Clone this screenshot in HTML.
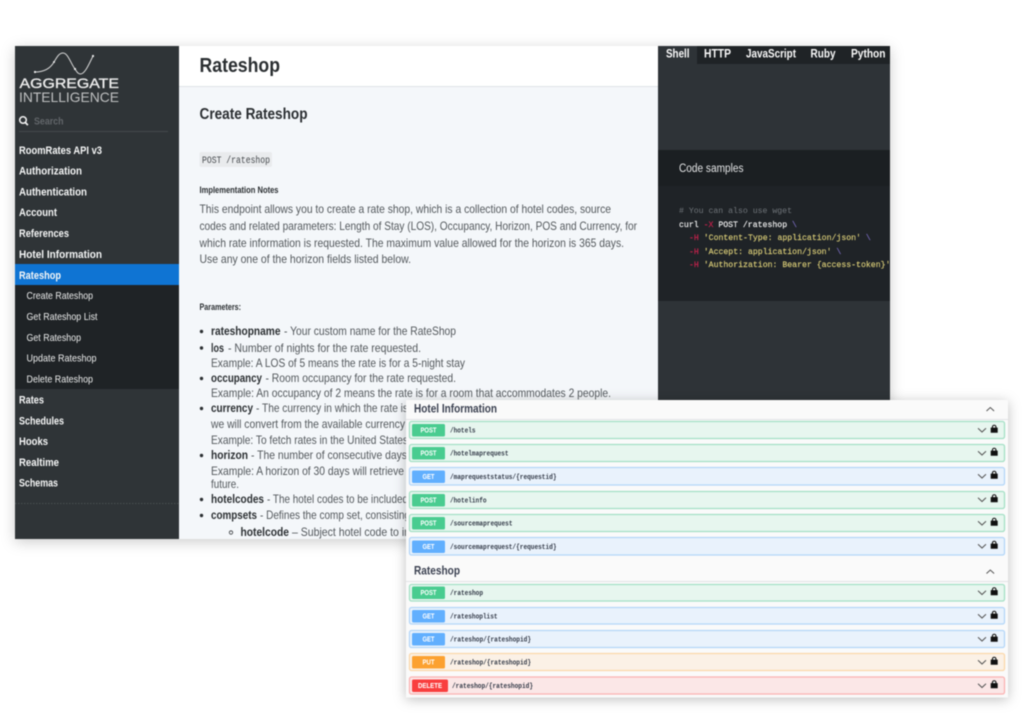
<!DOCTYPE html>
<html><head><meta charset="utf-8"><title>Rateshop</title>
<style>
html,body{margin:0;padding:0;background:#fff;width:1024px;height:722px;overflow:hidden}
svg{display:block;filter:blur(.4px)}
text{font-family:"Liberation Sans",sans-serif;white-space:pre}
.m{font-family:"Liberation Mono",monospace}
.nav{font-size:11px;font-weight:700;fill:#f6f7f7}
.sub{font-size:10.5px;fill:#eceded}
.p{font-size:12px;fill:#53585c}
.b{font-size:12px;font-weight:700;fill:#2b2f32}
.tab{font-size:11.5px;font-weight:700;fill:#fafafa}
.c{font-size:8.2px;font-family:"Liberation Mono",monospace;stroke-width:.15px}
.bd{font-size:7.4px;font-weight:700;fill:#fff}
.pt{font-size:7.2px;font-weight:700;fill:#333a48;font-family:"Liberation Mono",monospace}
.h{font-size:12px;font-weight:700;fill:#3b4151}
rect.r{stroke-width:1.300}
</style></head><body>
<svg width="1024" height="722" viewBox="0 0 1024 722" xmlns="http://www.w3.org/2000/svg">
<defs>
<filter id="s1" x="-5%" y="-5%" width="110%" height="112%"><feDropShadow dx="0" dy="3" stdDeviation="7" flood-color="#000" flood-opacity=".2"/></filter>
<filter id="s2" x="-5%" y="-8%" width="110%" height="116%"><feDropShadow dx="0" dy="2" stdDeviation="6" flood-color="#000" flood-opacity=".25"/></filter>
<clipPath id="mainclip"><rect x="15" y="46" width="875" height="493"/></clipPath>
<g id="ctl"><path d="M-26 -1.800l4 3.800 4-3.800" fill="none" stroke="#555" stroke-width="1"/><path d="M-13.300 -2.400h1.200v-.6a2.300 2.300 0 0 1 4.600 0v.6h1.200v5.200h-7z" fill="#111"/><path d="M-11 -2.400v-.7a1.200 1.200 0 0 1 2.400 0v.7z" fill="#f0f4f4"/></g>
</defs>

<rect x="15" y="46" width="875" height="493" fill="#f4f7fa" filter="url(#s1)"/>
<g clip-path="url(#mainclip)">
<!-- sidebar -->
<rect x="15" y="46" width="164" height="493" fill="#2f3437"/>
<path d="M35 72C44 72 50 69 54 62C57 57 59 53 63 53C68 53 71 64 75 69C77 72 78 74 80.500 74C85 74 89 64 93 56" fill="none" stroke="#d8d8d8" stroke-width="1"/>
<circle cx="35" cy="72" r="1.100" fill="#eee"/><circle cx="54" cy="62" r="1" fill="#eee"/><circle cx="75" cy="69" r="1.100" fill="#eee"/><circle cx="93" cy="56" r="1.100" fill="#eee"/>
<text x="19.500" y="88" font-size="14" fill="#ececec" stroke="#ececec" stroke-width=".35" textLength="99.500" lengthAdjust="spacingAndGlyphs">AGGREGATE</text>
<text x="19" y="102" font-size="14" fill="#bfc0c1" textLength="100" lengthAdjust="spacingAndGlyphs">INTELLIGENCE</text>
<circle cx="23" cy="120" r="3.300" fill="none" stroke="#f2f2f2" stroke-width="1.500"/><path d="M25.300 122.500l2.600 2.600" stroke="#f2f2f2" stroke-width="1.700"/>
<text x="34" y="124.500" font-size="10.500" font-weight="700" fill="#62666a" textLength="29.500" lengthAdjust="spacingAndGlyphs">Search</text>
<rect x="19" y="131" width="149" height="1" fill="#44494c"/>
<text class="nav" x="19" y="154" textLength="83" lengthAdjust="spacingAndGlyphs">RoomRates API v3</text>
<text class="nav" x="19" y="174.500" textLength="63" lengthAdjust="spacingAndGlyphs">Authorization</text>
<text class="nav" x="19" y="195.500" textLength="68" lengthAdjust="spacingAndGlyphs">Authentication</text>
<text class="nav" x="19" y="216" textLength="38" lengthAdjust="spacingAndGlyphs">Account</text>
<text class="nav" x="19" y="237" textLength="50" lengthAdjust="spacingAndGlyphs">References</text>
<text class="nav" x="19" y="258" textLength="83" lengthAdjust="spacingAndGlyphs">Hotel Information</text>
<rect x="15" y="264" width="164" height="21" fill="#0f74d3"/>
<text class="nav" x="19" y="279" textLength="42" lengthAdjust="spacingAndGlyphs">Rateshop</text>
<rect x="15" y="285" width="164" height="104" fill="#1f2326"/>
<text class="sub" x="26.500" y="299" textLength="66.500" lengthAdjust="spacingAndGlyphs">Create Rateshop</text>
<text class="sub" x="26.500" y="320" textLength="71" lengthAdjust="spacingAndGlyphs">Get Rateshop List</text>
<text class="sub" x="26.500" y="341" textLength="54.500" lengthAdjust="spacingAndGlyphs">Get Rateshop</text>
<text class="sub" x="26.500" y="361.500" textLength="70" lengthAdjust="spacingAndGlyphs">Update Rateshop</text>
<text class="sub" x="26.500" y="382.500" textLength="66.500" lengthAdjust="spacingAndGlyphs">Delete Rateshop</text>
<text class="nav" x="19" y="403.500" textLength="25" lengthAdjust="spacingAndGlyphs">Rates</text>
<text class="nav" x="19" y="424.500" textLength="45" lengthAdjust="spacingAndGlyphs">Schedules</text>
<text class="nav" x="19" y="445" textLength="29" lengthAdjust="spacingAndGlyphs">Hooks</text>
<text class="nav" x="19" y="466" textLength="40" lengthAdjust="spacingAndGlyphs">Realtime</text>
<text class="nav" x="19" y="486.500" textLength="39" lengthAdjust="spacingAndGlyphs">Schemas</text>
<path d="M15 503.500H179" stroke="#54585b" stroke-width=".8" stroke-dasharray="1.500 1.500"/>

<!-- content -->
<rect x="179" y="46" width="479" height="40" fill="#fff"/>
<rect x="179" y="86" width="479" height="1" fill="#dfe3e7"/>
<text x="199.500" y="72" font-size="20.500" font-weight="700" fill="#2a2e31" textLength="80.500" lengthAdjust="spacingAndGlyphs">Rateshop</text>
<text x="199.500" y="119" font-size="15.500" font-weight="700" fill="#2a2e31" textLength="108" lengthAdjust="spacingAndGlyphs">Create Rateshop</text>
<rect x="199.500" y="152" width="72.500" height="15" rx="2" fill="#e9ebed"/>
<text class="m" x="202" y="163" font-size="9.800" fill="#44484c" textLength="68" lengthAdjust="spacingAndGlyphs">POST /rateshop</text>
<text x="199.500" y="193" font-size="9" font-weight="700" fill="#2b2f32" textLength="79" lengthAdjust="spacingAndGlyphs">Implementation Notes</text>
<text class="p" x="199.500" y="213" textLength="411.500" lengthAdjust="spacingAndGlyphs">This endpoint allows you to create a rate shop, which is a collection of hotel codes, source</text>
<text class="p" x="199.500" y="230" textLength="437.500" lengthAdjust="spacingAndGlyphs">codes and related parameters: Length of Stay (LOS), Occupancy, Horizon, POS and Currency, for</text>
<text class="p" x="199.500" y="247" textLength="424.500" lengthAdjust="spacingAndGlyphs">which rate information is requested. The maximum value allowed for the horizon is 365 days.</text>
<text class="p" x="199.500" y="263" textLength="211.500" lengthAdjust="spacingAndGlyphs">Use any one of the horizon fields listed below.</text>
<text x="199.500" y="310" font-size="9" font-weight="700" fill="#2b2f32" textLength="41.500" lengthAdjust="spacingAndGlyphs">Parameters:</text>

<g fill="#2b2f32"><circle cx="201.500" cy="331.500" r="1.700"/><circle cx="201.500" cy="348" r="1.700"/><circle cx="201.500" cy="378.500" r="1.700"/><circle cx="201.500" cy="408.500" r="1.700"/><circle cx="201.500" cy="455.500" r="1.700"/><circle cx="201.500" cy="499.500" r="1.700"/><circle cx="201.500" cy="515.500" r="1.700"/></g>
<circle cx="231" cy="532.500" r="1.700" fill="none" stroke="#33373a" stroke-width=".8"/>

<text class="b" x="211" y="335" textLength="69.500" lengthAdjust="spacingAndGlyphs">rateshopname</text>
<text class="p" x="284" y="335" textLength="172" lengthAdjust="spacingAndGlyphs">- Your custom name for the RateShop</text>
<text class="b" x="211" y="352" textLength="13" lengthAdjust="spacingAndGlyphs">los</text>
<text class="p" x="228" y="352" textLength="193" lengthAdjust="spacingAndGlyphs">- Number of nights for the rate requested.</text>
<text class="p" x="211" y="367" textLength="254" lengthAdjust="spacingAndGlyphs">Example: A LOS of 5 means the rate is for a 5-night stay</text>
<text class="b" x="211" y="382" textLength="51" lengthAdjust="spacingAndGlyphs">occupancy</text>
<text class="p" x="265.500" y="382" textLength="190.500" lengthAdjust="spacingAndGlyphs">- Room occupancy for the rate requested.</text>
<text class="p" x="211" y="397" textLength="400" lengthAdjust="spacingAndGlyphs">Example: An occupancy of 2 means the rate is for a room that accommodates 2 people.</text>
<text class="b" x="211" y="412" textLength="42" lengthAdjust="spacingAndGlyphs">currency</text>
<text class="p" x="256" y="412" textLength="152" lengthAdjust="spacingAndGlyphs">- The currency in which the rate is</text>
<text class="p" x="211" y="428" textLength="194" lengthAdjust="spacingAndGlyphs">we will convert from the available currency</text>
<text class="p" x="211" y="444" textLength="197" lengthAdjust="spacingAndGlyphs">Example: To fetch rates in the United States</text>
<text class="b" x="211" y="459" textLength="37" lengthAdjust="spacingAndGlyphs">horizon</text>
<text class="p" x="251" y="459" textLength="156" lengthAdjust="spacingAndGlyphs">- The number of consecutive days</text>
<text class="p" x="211" y="475" textLength="193" lengthAdjust="spacingAndGlyphs">Example: A horizon of 30 days will retrieve</text>
<text class="p" x="211" y="488" textLength="28" lengthAdjust="spacingAndGlyphs">future.</text>
<text class="b" x="211" y="503" textLength="53" lengthAdjust="spacingAndGlyphs">hotelcodes</text>
<text class="p" x="267" y="503" textLength="141" lengthAdjust="spacingAndGlyphs">- The hotel codes to be included</text>
<text class="b" x="211" y="519" textLength="46" lengthAdjust="spacingAndGlyphs">compsets</text>
<text class="p" x="260" y="519" textLength="150" lengthAdjust="spacingAndGlyphs">- Defines the comp set, consisting</text>
<text class="b" x="240.500" y="536" textLength="48.500" lengthAdjust="spacingAndGlyphs">hotelcode</text>
<text class="p" x="292" y="536" textLength="118" lengthAdjust="spacingAndGlyphs">– Subject hotel code to in</text>

<!-- code panel -->
<rect x="658" y="46" width="232" height="493" fill="#2e3337"/>
<rect x="697" y="46" width="193" height="18" fill="#1f2326"/>
<text class="tab" x="666" y="57.500" textLength="23.500" lengthAdjust="spacingAndGlyphs">Shell</text>
<text class="tab" x="704" y="57.500" textLength="27" lengthAdjust="spacingAndGlyphs">HTTP</text>
<text class="tab" x="746" y="57.500" textLength="50" lengthAdjust="spacingAndGlyphs">JavaScript</text>
<text class="tab" x="810.500" y="57.500" textLength="25" lengthAdjust="spacingAndGlyphs">Ruby</text>
<text class="tab" x="851" y="57.500" textLength="34.500" lengthAdjust="spacingAndGlyphs">Python</text>
<rect x="658" y="150" width="232" height="36" fill="#1b1f22"/>
<text x="679" y="172" font-size="11.500" fill="#e4e5e6" textLength="64.500" lengthAdjust="spacingAndGlyphs">Code samples</text>
<rect x="658" y="186" width="232" height="115" fill="#1f2327"/>
<text class="c" x="679" y="213" fill="#70757a" textLength="113" lengthAdjust="spacingAndGlyphs"># You can also use wget</text>
<text class="c" x="679" y="227" fill="#f2f2f2" stroke="#f2f2f2">curl <tspan fill="#c9214c" stroke="#c9214c">-X</tspan> POST /rateshop <tspan fill="#7a6cc0" stroke="#7a6cc0">\</tspan></text>
<text class="c" x="689" y="240" fill="#dacd78" stroke="#dacd78"><tspan fill="#c9214c" stroke="#c9214c">-H</tspan> 'Content-Type: application/json' <tspan fill="#7a6cc0" stroke="#7a6cc0">\</tspan></text>
<text class="c" x="689" y="254" fill="#dacd78" stroke="#dacd78"><tspan fill="#c9214c" stroke="#c9214c">-H</tspan> 'Accept: application/json' <tspan fill="#7a6cc0" stroke="#7a6cc0">\</tspan></text>
<text class="c" x="689" y="267" fill="#dacd78" stroke="#dacd78"><tspan fill="#c9214c" stroke="#c9214c">-H</tspan> 'Authorization: Bearer {access-token}'</text>
</g>

<!-- swagger panel -->
<rect x="406" y="400" width="602" height="297.500" fill="#fafafa" filter="url(#s2)"/>
<text class="h" x="414" y="412.500" textLength="83" lengthAdjust="spacingAndGlyphs">Hotel Information</text>
<rect x="406" y="419" width="602" height="1" fill="#e2e3e5"/>
<path d="M986.500 411l3.800-3.500 3.800 3.500" fill="none" stroke="#555" stroke-width="1"/>

<rect class="r" x="409.500" y="421.500" width="595" height="17" rx="2" fill="#e7f6ef" stroke="#a4e0c5"/>
<rect x="412" y="424" width="33" height="12.500" rx="1.500" fill="#49cc90"/>
<text class="bd" x="420.500" y="432.600" textLength="16" lengthAdjust="spacingAndGlyphs">POST</text>
<text class="pt" x="450" y="432.500" textLength="25.500" lengthAdjust="spacingAndGlyphs">/hotels</text>
<use href="#ctl" x="1004" y="430"/>

<rect class="r" x="409.500" y="444.500" width="595" height="17" rx="2" fill="#e7f6ef" stroke="#a4e0c5"/>
<rect x="412" y="447" width="33" height="12.500" rx="1.500" fill="#49cc90"/>
<text class="bd" x="420.500" y="455.600" textLength="16" lengthAdjust="spacingAndGlyphs">POST</text>
<text class="pt" x="450" y="455.500" textLength="58.500" lengthAdjust="spacingAndGlyphs">/hotelmaprequest</text>
<use href="#ctl" x="1004" y="453"/>

<rect class="r" x="409.500" y="467.500" width="595" height="17.500" rx="2" fill="#e9f2fc" stroke="#b4d7f8"/>
<rect x="412" y="470.500" width="33" height="12.500" rx="1.500" fill="#61affe"/>
<text class="bd" x="422.500" y="479.100" textLength="12" lengthAdjust="spacingAndGlyphs">GET</text>
<text class="pt" x="450" y="479" textLength="106.500" lengthAdjust="spacingAndGlyphs">/maprequeststatus/{requestid}</text>
<use href="#ctl" x="1004" y="476"/>

<rect class="r" x="409.500" y="491.500" width="595" height="17" rx="2" fill="#e7f6ef" stroke="#a4e0c5"/>
<rect x="412" y="494" width="33" height="12.500" rx="1.500" fill="#49cc90"/>
<text class="bd" x="420.500" y="502.600" textLength="16" lengthAdjust="spacingAndGlyphs">POST</text>
<text class="pt" x="450" y="502.500" textLength="36.500" lengthAdjust="spacingAndGlyphs">/hotelinfo</text>
<use href="#ctl" x="1004" y="499.500"/>

<rect class="r" x="409.500" y="514.500" width="595" height="17" rx="2" fill="#e7f6ef" stroke="#a4e0c5"/>
<rect x="412" y="517" width="33" height="12.500" rx="1.500" fill="#49cc90"/>
<text class="bd" x="420.500" y="525.600" textLength="16" lengthAdjust="spacingAndGlyphs">POST</text>
<text class="pt" x="450" y="525.500" textLength="62.500" lengthAdjust="spacingAndGlyphs">/sourcemaprequest</text>
<use href="#ctl" x="1004" y="523"/>

<rect class="r" x="409.500" y="537.500" width="595" height="17.500" rx="2" fill="#e9f2fc" stroke="#b4d7f8"/>
<rect x="412" y="540.500" width="33" height="12.500" rx="1.500" fill="#61affe"/>
<text class="bd" x="422.500" y="549.100" textLength="12" lengthAdjust="spacingAndGlyphs">GET</text>
<text class="pt" x="450" y="549" textLength="106.500" lengthAdjust="spacingAndGlyphs">/sourcemaprequest/{requestid}</text>
<use href="#ctl" x="1004" y="546"/>

<text class="h" x="414" y="574.500" textLength="46" lengthAdjust="spacingAndGlyphs">Rateshop</text>
<rect x="406" y="581" width="602" height="1" fill="#e2e3e5"/>
<path d="M986.500 573.500l3.800-3.500 3.800 3.500" fill="none" stroke="#555" stroke-width="1"/>

<rect class="r" x="409.500" y="584.500" width="595" height="16.500" rx="2" fill="#e7f6ef" stroke="#a4e0c5"/>
<rect x="412" y="586.500" width="33" height="12.500" rx="1.500" fill="#49cc90"/>
<text class="bd" x="420.500" y="595.100" textLength="16" lengthAdjust="spacingAndGlyphs">POST</text>
<text class="pt" x="450" y="595" textLength="33" lengthAdjust="spacingAndGlyphs">/rateshop</text>
<use href="#ctl" x="1004" y="592.500"/>

<rect class="r" x="409.500" y="607.500" width="595" height="16.500" rx="2" fill="#e9f2fc" stroke="#b4d7f8"/>
<rect x="412" y="610" width="33" height="12.500" rx="1.500" fill="#61affe"/>
<text class="bd" x="422.500" y="618.600" textLength="12" lengthAdjust="spacingAndGlyphs">GET</text>
<text class="pt" x="450" y="618.500" textLength="47.500" lengthAdjust="spacingAndGlyphs">/rateshoplist</text>
<use href="#ctl" x="1004" y="616"/>

<rect class="r" x="409.500" y="630.500" width="595" height="17" rx="2" fill="#e9f2fc" stroke="#b4d7f8"/>
<rect x="412" y="633" width="33" height="12.500" rx="1.500" fill="#61affe"/>
<text class="bd" x="422.500" y="641.600" textLength="12" lengthAdjust="spacingAndGlyphs">GET</text>
<text class="pt" x="450" y="641.500" textLength="81" lengthAdjust="spacingAndGlyphs">/rateshop/{rateshopid}</text>
<use href="#ctl" x="1004" y="639"/>

<rect class="r" x="409.500" y="653.500" width="595" height="17" rx="2" fill="#fbf1e6" stroke="#fbd8aa"/>
<rect x="412" y="656" width="33" height="12.500" rx="1.500" fill="#fca130"/>
<text class="bd" x="422.500" y="664.600" textLength="12" lengthAdjust="spacingAndGlyphs">PUT</text>
<text class="pt" x="450" y="664.500" textLength="81" lengthAdjust="spacingAndGlyphs">/rateshop/{rateshopid}</text>
<use href="#ctl" x="1004" y="662"/>

<rect class="r" x="409.500" y="677" width="595" height="17" rx="2" fill="#fbe7e7" stroke="#fbb3b3"/>
<rect x="412" y="679.500" width="36" height="12.500" rx="1.500" fill="#f93e3e"/>
<text class="bd" x="418" y="688.100" textLength="24" lengthAdjust="spacingAndGlyphs">DELETE</text>
<text class="pt" x="452" y="688" textLength="81" lengthAdjust="spacingAndGlyphs">/rateshop/{rateshopid}</text>
<use href="#ctl" x="1004" y="685.500"/>
</svg>
</body></html>
